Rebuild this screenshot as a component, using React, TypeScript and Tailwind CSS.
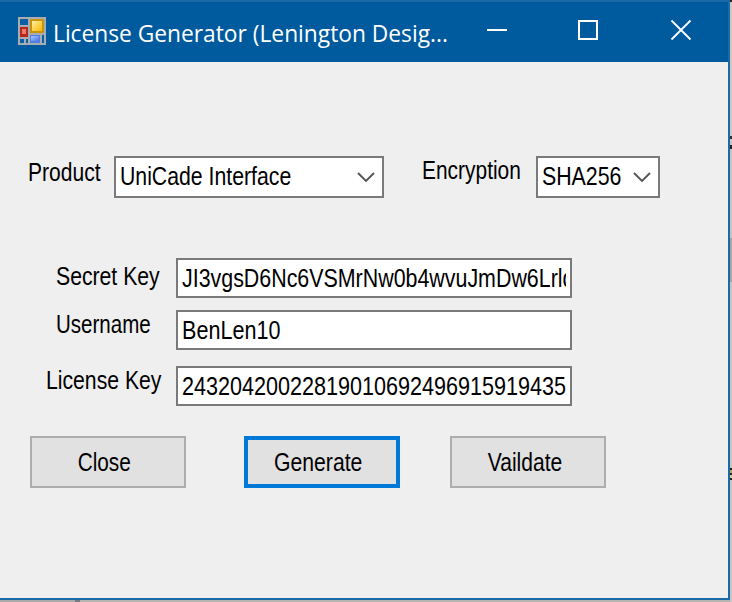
import type { ReactNode } from "react";

const TEXT = "block w-max origin-left whitespace-pre text-[26px] leading-6";

function Label({ children, className }: { children: ReactNode; className: string }) {
  return (
    <label className={`block shrink-0 ${className}`}>
      {children}
    </label>
  );
}

function Chevron() {
  return (
    <svg width="18" height="12" viewBox="0 0 18 12" fill="none" className="shrink-0">
      <path d="M1 2 9 10 17 2" stroke="#555" strokeWidth="1.9" />
    </svg>
  );
}

function Field({ children }: { children: ReactNode }) {
  return (
    <div className="h-10 w-[396px] shrink-0 border-2 border-[#7a7a7a] bg-white pl-1 pr-1">
      <div className="h-full overflow-hidden pt-1.5">{children}</div>
    </div>
  );
}

function FormIcon() {
  return (
    <svg width="28" height="28" viewBox="0 0 28 28" className="shrink-0">
      <defs>
        <linearGradient id="gold" x1="0" y1="0" x2="1" y2="1">
          <stop offset="0" stopColor="#fff0a0" />
          <stop offset="1" stopColor="#f5b800" />
        </linearGradient>
        <linearGradient id="sky" x1="0" y1="0" x2="1" y2="1">
          <stop offset="0" stopColor="#a9c8ff" />
          <stop offset="1" stopColor="#4676e0" />
        </linearGradient>
      </defs>
      <rect width="28" height="28" fill="#a9adb1" />
      <rect x="2" y="2" width="8" height="6" fill="#0a5fa5" />
      <rect x="12" y="2" width="14" height="14" fill="#c79412" />
      <rect x="14" y="4" width="10" height="10" fill="url(#gold)" />
      <rect x="2" y="10" width="8" height="10" fill="#b5271d" />
      <rect x="4" y="12" width="4" height="5" fill="#ee7b6c" />
      <rect x="2" y="22" width="4" height="4" fill="#0a5fa5" />
      <rect x="8" y="22" width="2" height="4" fill="#0a5fa5" />
      <rect x="12" y="18" width="10" height="8" fill="#4f7fe4" />
      <rect x="13" y="19" width="8" height="5" fill="url(#sky)" />
      <rect x="24" y="18" width="2" height="8" fill="#0a5fa5" />
    </svg>
  );
}

export default function App() {
  return (
    <div className="flex h-[602px] w-[732px] overflow-hidden bg-[#bdbdbd] font-['Liberation_Sans',Arial,sans-serif] text-black">
      <div className="flex h-[602px] w-[730px] shrink-0 flex-col">
        <div className="flex h-[600px] flex-col border-b-2 border-r-2 border-t-2 border-[#1a6aa8] bg-[#efefef]">
          <header className="flex h-[60px] shrink-0 bg-[#005a9e] text-white">
            <div className="ml-[18px] mt-[15px]">
              <FormIcon />
            </div>
            <div className="ml-[7px] mt-[15px] w-[434px] shrink-0 font-['Open_Sans','Noto_Sans',sans-serif]">
              <span className="block w-max origin-left scale-x-[.948] whitespace-pre text-2xl leading-8">License Generator (Lenington Desig...</span>
            </div>
            <svg width="206" height="22" viewBox="0 0 206 22" fill="none" stroke="white" strokeWidth="2" className="mt-[17px] shrink-0">
              <path d="M0 11H20M92 2H110V20H92Z" />
              <path d="M184.5 1.5 203.5 20.5M203.5 1.5 184.5 20.5" strokeWidth="1.8" />
            </svg>
          </header>
          <main className="flex flex-col">
            <div className="mt-[94px] flex h-[42px]">
              <Label className="ml-7 mt-1 w-[86px]">
                <span className={`${TEXT} scale-x-[.81]`}>Product</span>
              </Label>
              <div className="flex w-[270px] shrink-0 items-start justify-between border-2 border-[#7a7a7a] bg-white pl-1 pr-[7px] pt-1.5">
                <div className="w-[190px]">
                  <span className={`${TEXT} scale-x-[.817]`}>UniCade Interface</span>
                </div>
                <div className="pt-[7px]"><Chevron /></div>
              </div>
              <Label className="ml-[38px] mt-0.5 w-[114px]">
                <span className={`${TEXT} scale-x-[.805]`}>Encryption</span>
              </Label>
              <div className="flex w-[124px] shrink-0 items-start justify-between border-2 border-[#7a7a7a] bg-white pl-1 pr-[7px] pt-1.5">
                <div className="w-[81px]">
                  <span className={`${TEXT} scale-x-[.82]`}>SHA256</span>
                </div>
                <div className="pt-[7px]"><Chevron /></div>
              </div>
            </div>
            <div className="mt-[60px] flex">
              <Label className="ml-14 mt-1.5 w-[120px]">
                <span className={`${TEXT} scale-x-[.815]`}>Secret Key</span>
              </Label>
              <Field>
                <span className={`${TEXT} scale-x-[.823]`}>JI3vgsD6Nc6VSMrNw0b4wvuJmDw6Lrld</span>
              </Field>
            </div>
            <div className="mt-3 flex">
              <Label className="ml-14 mt-0.5 w-[120px]">
                <span className={`${TEXT} scale-x-[.79]`}>Username</span>
              </Label>
              <Field>
                <span className={`${TEXT} scale-x-[.83]`}>BenLen10</span>
              </Field>
            </div>
            <div className="mt-4 flex">
              <Label className="ml-[46px] mt-0.5 w-[130px]">
                <span className={`${TEXT} scale-x-[.815]`}>License Key</span>
              </Label>
              <Field>
                <span className={`${TEXT} scale-x-[.83]`}>24320420022819010692496915919435</span>
              </Field>
            </div>
            <div className="ml-[30px] mt-[30px] flex">
              <button className="flex h-[52px] w-[156px] justify-center border-2 border-[#adadad] bg-[#e1e1e1] pr-[7px] pt-3">
                <span className={`${TEXT} !origin-center scale-x-[.8]`}>Close</span>
              </button>
              <button className="ml-[58px] flex h-[52px] w-[156px] justify-center border-4 border-[#0078d7] bg-[#e1e1e1] pr-[7px] pt-2.5">
                <span className={`${TEXT} !origin-center scale-x-[.815]`}>Generate</span>
              </button>
              <button className="ml-[50px] flex h-[52px] w-[156px] justify-center border-2 border-[#adadad] bg-[#e1e1e1] pr-[5px] pt-3">
                <span className={`${TEXT} !origin-center scale-x-[.81]`}>Vaildate</span>
              </button>
            </div>
          </main>
        </div>
        <div className="flex h-0.5">
          <div className="w-[75px] bg-[#aaa]" />
          <div className="w-[5px] bg-[#777b86]" />
          <div className="grow bg-[#b7b5b2]" />
        </div>
      </div>
      <div className="flex w-0.5 flex-col">
        <div className="h-[2px] bg-[#222]" />
        <div className="h-[134px] bg-[#c9c9c9]" />
        <div className="h-[3px] bg-[#333]" />
        <div className="h-[6px] bg-[#c4c4c4]" />
        <div className="h-[4px] bg-[#222]" />
        <div className="h-[89px] bg-[#c4c4c4]" />
        <div className="h-[44px] bg-[#a5a5a5]" />
        <div className="h-[186px] bg-[#c4c4c4]" />
        <div className="h-[2px] bg-[#222]" />
        <div className="h-[3px] bg-[#b7a46b]" />
        <div className="h-[2px] bg-[#222]" />
        <div className="h-[3px] bg-[#d2c9a0]" />
        <div className="h-[2px] bg-[#222]" />
        <div className="grow bg-[#c4c4c4]" />
      </div>
    </div>
  );
}
